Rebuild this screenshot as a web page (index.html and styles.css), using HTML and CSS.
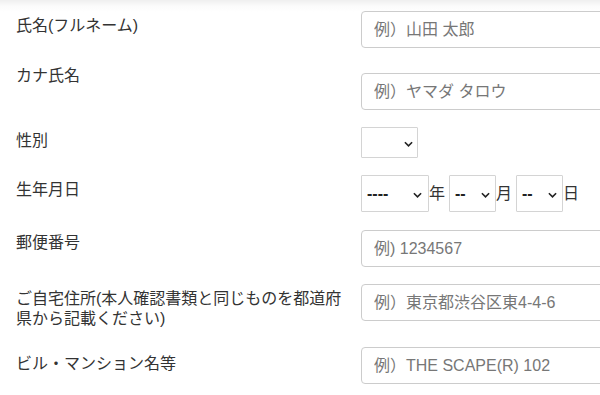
FILE: index.html
```html
<!DOCTYPE html>
<html lang="ja">
<head>
<meta charset="utf-8">
<title>フォーム</title>
<link rel="stylesheet" href="styles.css">
</head>
<body>
<form class="form">
  <div class="row r1">
    <label class="lbl">氏名(フルネーム)</label>
    <div class="ctl"><input class="txt" type="text" placeholder="例）山田 太郎"></div>
  </div>
  <div class="row r2">
    <label class="lbl">カナ氏名</label>
    <div class="ctl"><input class="txt" type="text" placeholder="例）ヤマダ タロウ"></div>
  </div>
  <div class="row r3">
    <label class="lbl">性別</label>
    <div class="ctl">
      <span class="sel sel-gender"><select><option></option></select><svg class="chev" viewBox="0 0 10 6" width="9" height="6"><path d="M1 1 L5 5 L9 1" fill="none" stroke="#222" stroke-width="1.8"/></svg></span>
    </div>
  </div>
  <div class="row r4">
    <label class="lbl">生年月日</label>
    <div class="ctl date">
      <span class="sel sel-year"><select><option>----</option></select><svg class="chev" viewBox="0 0 10 6" width="9" height="6"><path d="M1 1 L5 5 L9 1" fill="none" stroke="#222" stroke-width="1.8"/></svg></span><span class="unit">年</span>
      <span class="sel sel-md"><select><option>--</option></select><svg class="chev" viewBox="0 0 10 6" width="9" height="6"><path d="M1 1 L5 5 L9 1" fill="none" stroke="#222" stroke-width="1.8"/></svg></span><span class="unit">月</span>
      <span class="sel sel-md"><select><option>--</option></select><svg class="chev" viewBox="0 0 10 6" width="9" height="6"><path d="M1 1 L5 5 L9 1" fill="none" stroke="#222" stroke-width="1.8"/></svg></span><span class="unit">日</span>
    </div>
  </div>
  <div class="row r5">
    <label class="lbl">郵便番号</label>
    <div class="ctl"><input class="txt" type="text" placeholder="例) 1234567"></div>
  </div>
  <div class="row r6">
    <label class="lbl">ご自宅住所(本人確認書類と同じものを都道府県から記載ください)</label>
    <div class="ctl"><input class="txt" type="text" placeholder="例）東京都渋谷区東4-4-6"></div>
  </div>
  <div class="row r7">
    <label class="lbl">ビル・マンション名等</label>
    <div class="ctl"><input class="txt" type="text" placeholder="例）THE SCAPE(R) 102"></div>
  </div>
</form>
</body>
</html>
```
FILE: styles.css
```css
html, body {
  margin: 0;
  padding: 0;
}
body {
  width: 600px;
  height: 395px;
  overflow: hidden;
  background: linear-gradient(#efefef 0, #fbfbfb 6px, #ffffff 12px) no-repeat;
  font-family: "Liberation Sans", "Noto Sans CJK JP", sans-serif;
  font-size: 16px;
  color: #333;
}
.form {
  padding-top: 11px;
  padding-left: 16px;
}
.row {
  display: grid;
  grid-template-columns: 329px 320px;
  column-gap: 16px;
  align-items: start;
}
.lbl {
  display: block;
  line-height: 20px;
  color: #333;
}
.r1 { margin-bottom: 25px; }
.r1 .lbl { margin-top: 5px; }
.r2 { margin-bottom: 17px; }
.r2 .lbl { margin-top: -7px; }
.r3 { margin-bottom: 17px; }
.r3 .lbl { margin-top: 4px; }
.r4 { margin-bottom: 18px; }
.r4 .lbl { margin-top: 5px; }
.r5 { margin-bottom: 17px; }
.r5 .lbl { margin-top: 3px; }
.r6 { margin-bottom: 18px; }
.r6 .lbl { margin-top: 5px; }
.r7 .lbl { margin-top: 7px; }

.ctl {
  display: flex;
  align-items: center;
}
.txt {
  box-sizing: border-box;
  width: 300px;
  height: 37px;
  margin: 0;
  padding: 0 12px;
  border: 1px solid #cccccc;
  border-radius: 4px;
  font-family: "Liberation Sans", "Noto Sans CJK JP", sans-serif;
  font-size: 16px;
  color: #555;
  background: #fff;
  outline: none;
}
.txt::placeholder {
  color: #777;
  opacity: 1;
}
.sel {
  position: relative;
  display: inline-block;
  flex: none;
}
.sel select {
  appearance: none;
  -webkit-appearance: none;
  box-sizing: border-box;
  display: block;
  margin: 0;
  padding: 0 0 0 5px;
  border: 1px solid #d4d4d4;
  border-radius: 1px;
  background: #fff;
  font-family: "Liberation Sans", "Noto Sans CJK JP", sans-serif;
  font-size: 16px;
  font-weight: bold;
  color: #222;
  outline: none;
}
.sel-gender select { width: 57px; height: 31px; }
.sel-year select { width: 68px; height: 37px; }
.sel-md select { width: 47px; height: 37px; }
.chev {
  position: absolute;
  right: 6px;
  top: 50%;
  margin-top: -2px;
  pointer-events: none;
}
.sel-gender .chev { right: 5px; }
.sel-year .chev { right: 7px; }
.unit {
  display: inline-block;
  width: 16px;
  margin-right: 4px;
  line-height: 20px;
  color: #333;
}
```
